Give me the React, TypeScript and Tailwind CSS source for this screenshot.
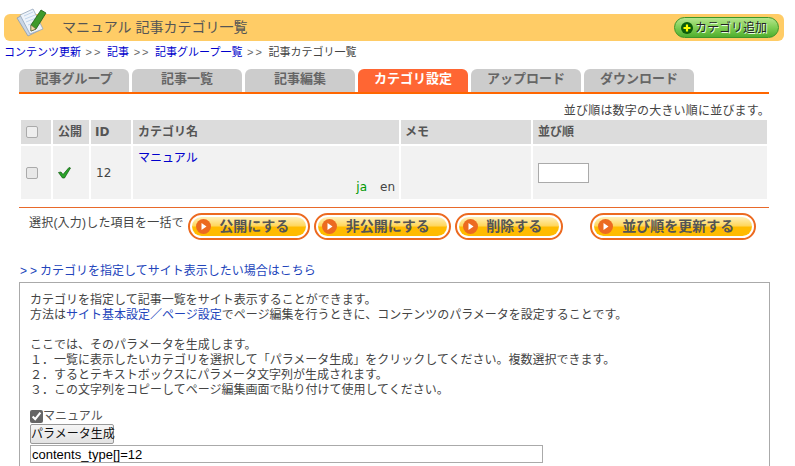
import React from 'react';

const jp = "font-['Liberation_Sans','Noto_Sans_CJK_JP',sans-serif]";

const tabs = ['記事グループ', '記事一覧', '記事編集', 'カテゴリ設定', 'アップロード', 'ダウンロード'];

function ActionButton({ label, width }: { label: string; width: string }) {
  return (
    <button className={`${width} h-[27px] rounded-full border-[2px] border-[#ec6a20] bg-white p-[2px]`}>
      <span className="flex h-full w-full items-center rounded-full bg-[linear-gradient(#fff0b8_0%,#ffd75f_45%,#ffbb00_55%,#ffbb00_100%)] pl-[4px]">
        <svg width="15" height="15" viewBox="0 0 15 15" className="shrink-0">
          <circle cx="7.5" cy="7.5" r="7.5" fill="#ec6a20" />
          <path d="M5.5 4 L10.5 7.5 L5.5 11 Z" fill="#fff" />
        </svg>
        <span className="flex-1 pr-[8px] pb-[2px] text-center text-[14px] leading-none font-bold text-[#555]">{label}</span>
      </span>
    </button>
  );
}

function Sep() {
  return <span className="mx-[4.6px] tracking-[2px] text-[#666]">&gt;&gt;</span>;
}

function NoteIcon() {
  return (
    <svg width="32" height="30" viewBox="0 0 32 30" className="absolute left-[16px] top-[7px]">
      <path d="M1 11 L12 5 L24 23 L12 29 Z" fill="#c9d6e6" stroke="#8a9bb0" strokeWidth="0.8" />
      <path d="M4 8 L17 2 L27 22 L14 27 Z" fill="#eef3fa" stroke="#93a5ba" strokeWidth="0.8" />
      <path d="M8 9 L17 5 M9 12 L19 8 M10 15 L20 11 M12 18 L20 15" stroke="#b4cbe6" strokeWidth="0.8" />
      <path d="M15 18 L25 3 L30 6 L20 22 L15 24 Z" fill="#3f9a2c" stroke="#1d5c14" strokeWidth="0.8" />
      <path d="M15 24 L15 18 L20 22 Z" fill="#f2d9a8" stroke="#5c4a2a" strokeWidth="0.5" />
    </svg>
  );
}

export default function App() {
  return (
    <div className={`${jp} relative h-[466px] w-[795px] overflow-hidden bg-white text-[12px] text-[#444]`}>
      <div className="pt-[14px] pl-[4px] pr-[11px]">
        <div className="flex h-[27px] items-center justify-between rounded-[6px] bg-[#ffcc66] pl-[58px] pr-[5px]">
          <span className="text-[14px] text-[#555]">マニュアル 記事カテゴリ一覧</span>
          <button className="flex h-[21px] w-[105px] items-center rounded-full border border-[#3c962a] bg-[linear-gradient(#b5e58c_0%,#7fce55_50%,#4fae2e_100%)] pl-[6px] text-[12px] text-[#222] [text-shadow:1px_1px_0_#e8ffe0]">
            <svg width="12" height="12" viewBox="0 0 12 12" className="mr-[2px] shrink-0">
              <circle cx="6" cy="6" r="6" fill="#0b5c0b" />
              <path d="M6 2.5 V9.5 M2.5 6 H9.5" stroke="#ffff00" strokeWidth="2.2" />
            </svg>
            カテゴリ追加
          </button>
        </div>
      </div>

      <div className="mt-[2px] h-[18px] pl-[4px] text-[11px] leading-[18px] text-[#444]">
        <a className="text-[#0000cc]">コンテンツ更新</a>
        <Sep />
        <a className="text-[#0000cc]">記事</a>
        <Sep />
        <a className="text-[#0000cc]">記事グループ一覧</a>
        <Sep />
        記事カテゴリ一覧
      </div>

      <div className="mt-[8px] ml-[19px] flex w-[750px] gap-[3px] border-b-[2px] border-[#ff6600]">
        {tabs.map((t) => (
          <div
            key={t}
            className={
              t === 'カテゴリ設定'
                ? 'flex h-[23px] w-[110px] items-center justify-center rounded-t-[6px] bg-[#ff6633] pb-[3px] text-[13px] font-bold text-white'
                : 'flex h-[23px] w-[110px] items-center justify-center rounded-t-[6px] bg-[#cccccc] pb-[3px] text-[13px] font-bold text-[#666]'
            }
          >
            {t}
          </div>
        ))}
      </div>

      <div className="mt-[9px] mr-[25px] h-[15px] text-right tracking-[0.2px] leading-[16px] text-[#444]">並び順は数字の大きい順に並びます。</div>

      <table className="ml-[19px] w-[750px] table-fixed border-separate border-spacing-[2px] text-[12px]">
        <thead>
          <tr className="h-[24px] bg-[#dcdcdc] text-left font-bold text-[#555]">
            <th className="w-[30px] pl-[5px]">
              <span className="block h-[12px] w-[12px] rounded-[2px] border border-[#aaa] bg-[#eee]" />
            </th>
            <th className="w-[36px] pl-[5px]">公開</th>
            <th className="w-[40px] pl-[4px] font-['DejaVu_Sans',sans-serif]">ID</th>
            <th className="w-[266px] pl-[5px]">カテゴリ名</th>
            <th className="w-[130px] pl-[4px]">メモ</th>
            <th className="pl-[5px]">並び順</th>
          </tr>
        </thead>
        <tbody>
          <tr className="h-[53px] bg-[#f2f2f2]">
            <td className="pl-[5px]">
              <span className="block h-[12px] w-[12px] rounded-[2px] border border-[#aaa] bg-[#e8e8e8]" />
            </td>
            <td className="pl-[5px]">
              <svg width="13" height="13" viewBox="0 0 13 13">
                <path d="M0.5 6.5 L3 6 L5 8.5 L11 1.5 L12.5 2 L6.5 12 L4.5 12 Z" fill="#2aa52a" stroke="#0c5a0c" strokeWidth="0.7" />
              </svg>
            </td>
            <td className="pl-[5px] font-['DejaVu_Sans',sans-serif]">12</td>
            <td className="relative pl-[5px] align-top">
              <a className="mt-[3px] block text-[12px] text-[#0000cc]">マニュアル</a>
              <span className="absolute right-[4px] bottom-[3px] font-['DejaVu_Sans',sans-serif] text-[12px]">
                <span className="text-[#009900]">ja</span>
                <span className="ml-[13px]">en</span>
              </span>
            </td>
            <td />
            <td className="pl-[5px]">
              <input className="block h-[20px] w-[51px] border border-[#aaa] bg-white" />
            </td>
          </tr>
        </tbody>
      </table>

      <div className="ml-[19px] mt-[6px] flex h-[40px] w-[750px] border-t border-[#e8692a] pt-[5px]">
        <span className="mt-[1px] ml-[10px] mr-[4px] text-[12px] leading-[18px] tracking-[0.2px]">選択(入力)した項目を一括で</span>
        <div className="flex gap-[4px]">
          <ActionButton label="公開にする" width="w-[122px]" />
          <ActionButton label="非公開にする" width="w-[137px]" />
          <ActionButton label="削除する" width="w-[108px]" />
        </div>
        <div className="ml-[27px]">
          <ActionButton label="並び順を更新する" width="w-[166px]" />
        </div>
      </div>

      <a className="ml-[20px] mt-[14px] block h-[20px] text-[12px] leading-[20px] text-[#2244bb]">
        <span className="tracking-[3px]">&gt;&gt;</span>カテゴリを指定してサイト表示したい場合はこちら
      </a>

      <div className="mt-[1px] ml-[19px] w-[751px] border border-[#aaa] px-[10px] pt-[10px] pb-[40px] leading-[15px]">
        <p>カテゴリを指定して記事一覧をサイト表示することができます。</p>
        <p>
          方法は<a className="text-[#2244bb]">サイト基本設定／ページ設定</a>でページ編集を行うときに、コンテンツのパラメータを設定することです。
        </p>
        <p className="mt-[15px]">ここでは、そのパラメータを生成します。</p>
        <p>１．一覧に表示したいカテゴリを選択して「パラメータ生成」をクリックしてください。複数選択できます。</p>
        <p>２．するとテキストボックスにパラメータ文字列が生成されます。</p>
        <p>３．この文字列をコピーしてページ編集画面で貼り付けて使用してください。</p>
        <label className="mt-[11px] flex h-[15px] items-center text-[12px] text-[#555]">
          <input type="checkbox" defaultChecked className="mr-0 h-[13px] w-[13px] accent-[#666]" />
          マニュアル
        </label>
        <button className="block h-[20px] w-[84px] rounded-[2px] border border-[#999] bg-[linear-gradient(#f6f6f6,#e2e2e2)] text-[12px] leading-none whitespace-nowrap text-[#111]">パラメータ生成</button>
        <input
          readOnly
          value="contents_type[]=12"
          className="mt-[1px] block h-[18px] w-[513px] border border-[#aaa] px-[1px] text-[13px] text-black"
        />
      </div>

      <NoteIcon />
    </div>
  );
}
